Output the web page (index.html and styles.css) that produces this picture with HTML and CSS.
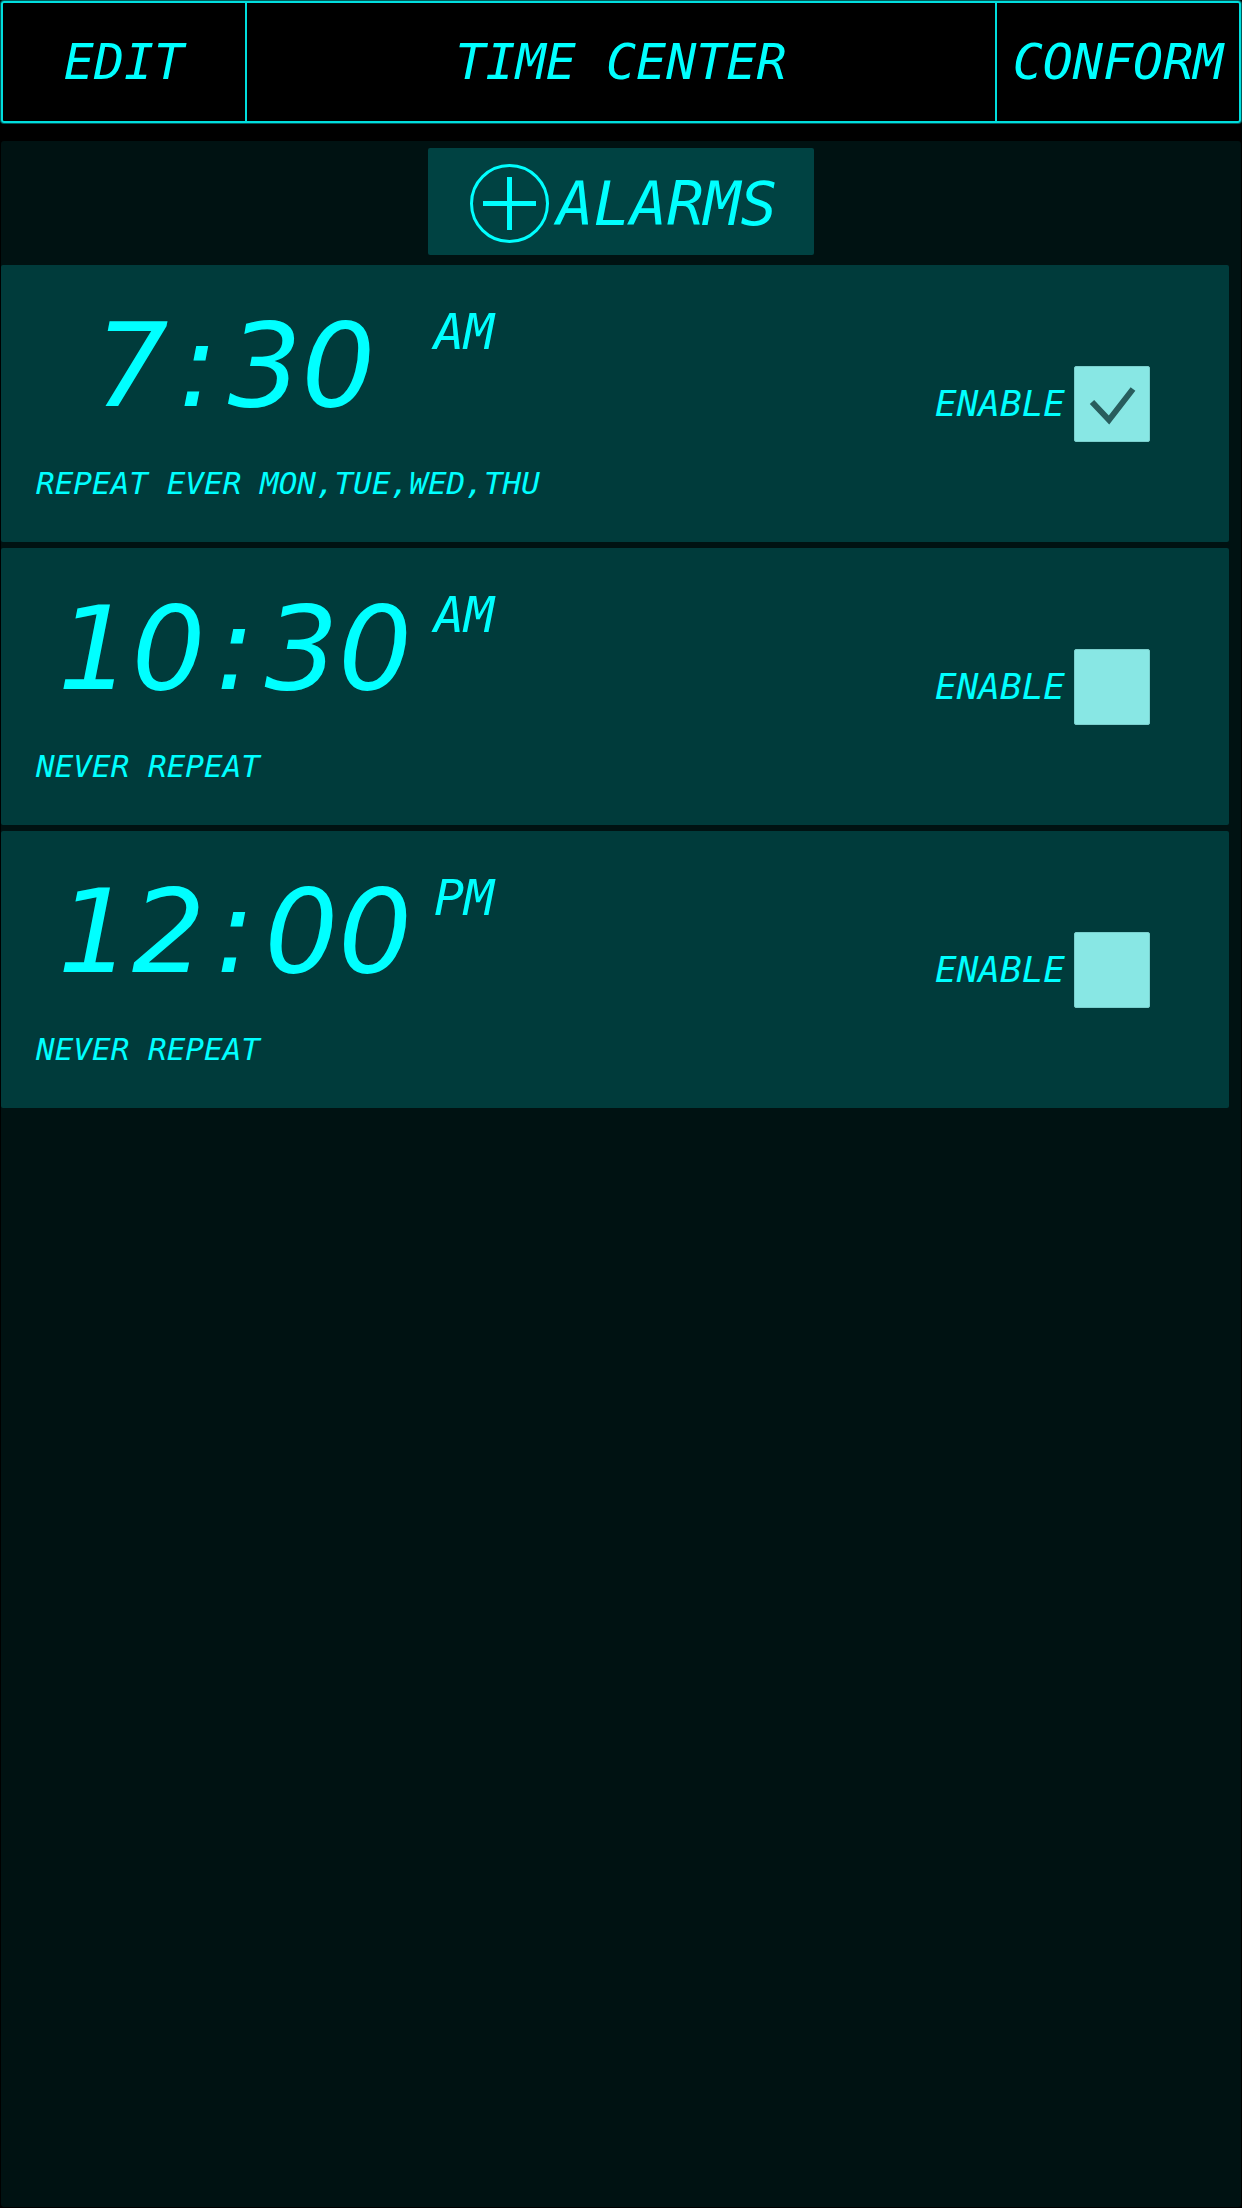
FILE: index.html
```html
<!DOCTYPE html>
<html lang="en">

<head>
    <meta charset="UTF-8">
    <meta name="viewport" content="width=device-width, initial-scale=1">
    <title>Time Center</title>
    <link rel="stylesheet" href="styles.css">
</head>

<body>

    <header class="topbar">
        <button type="button" class="topbar-btn">EDIT</button>
        <h1 class="topbar-title">TIME CENTER</h1>
        <button type="button" class="topbar-btn">CONFORM</button>
    </header>

    <main class="panel">
        <button type="button" class="add-btn">
            <svg class="add-icon" viewBox="0 0 79 79" aria-hidden="true">
                <circle cx="39.5" cy="39.5" r="38" fill="none" stroke="currentColor" stroke-width="3" />
                <path d="M39.5 13v53M13 39.5h53" stroke="currentColor" stroke-width="5" />
            </svg>
            ALARMS
        </button>

        <ul class="alarms">
            <li class="alarm">
                <div class="info">
                    <div class="clock">
                        <span class="time">7<span class="colon">:</span>30</span>
                        <span class="period">AM</span>
                    </div>
                    <p class="repeat">REPEAT EVER MON,TUE,WED,THU</p>
                </div>
                <label class="enable">
                    ENABLE
                    <span class="check">
                        <input type="checkbox" checked>
                        <svg viewBox="0 0 76 76" aria-hidden="true"><path d="M18 36L35 54L59 23" /></svg>
                    </span>
                </label>
            </li>

            <li class="alarm">
                <div class="info">
                    <div class="clock">
                        <span class="time">10<span class="colon">:</span>30</span>
                        <span class="period">AM</span>
                    </div>
                    <p class="repeat">NEVER REPEAT</p>
                </div>
                <label class="enable">
                    ENABLE
                    <span class="check">
                        <input type="checkbox">
                        <svg viewBox="0 0 76 76" aria-hidden="true"><path d="M18 36L35 54L59 23" /></svg>
                    </span>
                </label>
            </li>

            <li class="alarm">
                <div class="info">
                    <div class="clock">
                        <span class="time">12<span class="colon">:</span>00</span>
                        <span class="period">PM</span>
                    </div>
                    <p class="repeat">NEVER REPEAT</p>
                </div>
                <label class="enable">
                    ENABLE
                    <span class="check">
                        <input type="checkbox">
                        <svg viewBox="0 0 76 76" aria-hidden="true"><path d="M18 36L35 54L59 23" /></svg>
                    </span>
                </label>
            </li>
        </ul>
    </main>

</body>

</html>
```
FILE: styles.css
```css
* {
    box-sizing: border-box;
}

body {
    display: flex;
    flex-direction: column;
    min-height: 100vh;
    margin: 0;
    padding: 1px;
    background: #000;
    color: #00ffff;
    font-family: "DejaVu Sans Mono", "Liberation Mono", monospace;
    font-style: italic;
}

button {
    background: none;
    border: none;
    padding: 0;
    color: inherit;
    font: inherit;
    cursor: pointer;
}

/* top bar */
.topbar {
    display: flex;
    height: 122px;
    border: 2px solid #00dede;
    border-radius: 3px;
    box-shadow: 0 0 0 1px #005a5a;
    font-size: 50px;
    line-height: 60px;
}

.topbar-btn {
    flex: 0 0 244px;
}

.topbar-btn:first-child {
    border-right: 2px solid #00dede;
}

.topbar-btn:last-child {
    border-left: 2px solid #00dede;
}

.topbar-title {
    flex: 1;
    margin: 0;
    align-self: center;
    text-align: center;
    font-size: 50px;
    font-weight: normal;
}

/* alarm panel */
.panel {
    flex: 1;
    display: flex;
    flex-direction: column;
    margin-top: 18px;
    padding-top: 7px;
    background: #001212;
    border-radius: 3px;
}

.add-btn {
    display: flex;
    align-items: center;
    align-self: center;
    gap: 8px;
    padding: 16px 37px 12px 42px;
    background: #004242;
    border-radius: 2px;
    font-size: 61px;
    line-height: 79px;
}

.add-icon {
    width: 79px;
    height: 79px;
}

.alarms {
    display: flex;
    flex-direction: column;
    gap: 6px;
    margin: 10px 12px 0 0;
    padding: 0;
    list-style: none;
}

.alarm {
    display: flex;
    align-items: center;
    justify-content: space-between;
    padding: 43px 79px 39px 35px;
    background: #003b3b;
    border-radius: 2px;
}

.clock {
    display: flex;
    align-items: flex-start;
}

.time {
    width: 398px;
    text-align: center;
    font-family: "DejaVu Sans", "Liberation Sans", sans-serif;
    font-size: 116px;
    line-height: 116px;
}

.colon {
    padding: 0 10px;
}

.period {
    font-size: 50px;
    line-height: 48px;
}

.repeat {
    margin: 39px 0 0;
    font-size: 31px;
    line-height: 40px;
}

/* centred on the whole card, not on its padded area */
.enable {
    display: flex;
    align-items: center;
    gap: 9px;
    margin-bottom: 4px;
    font-size: 36px;
    cursor: pointer;
}

.check {
    position: relative;
    width: 76px;
    height: 76px;
}

.check input {
    appearance: none;
    display: block;
    width: 100%;
    height: 100%;
    margin: 0;
    background: #88e7e4;
    border: 1px solid #7acfcd;
    border-radius: 2px;
    cursor: pointer;
}

.check svg {
    position: absolute;
    inset: 0;
    display: none;
    fill: none;
    stroke: #285d5d;
    stroke-width: 6;
    pointer-events: none;
}

.check input:checked + svg {
    display: block;
}
```
